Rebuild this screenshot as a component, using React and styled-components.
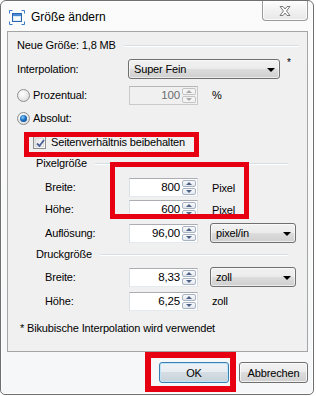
import React from "react";
import styled, { createGlobalStyle } from "styled-components";

const Global = createGlobalStyle`
  html, body { margin: 0; padding: 0; background: #ffffff; }
  body { font-family: "Liberation Sans", Arial, sans-serif; font-size: 11px; letter-spacing: -0.15px; color: #000; }
  * { box-sizing: border-box; }
`;

const Window = styled.div`
  position: relative;
  width: 314px;
  height: 395px;
  border: 1px solid #6f6f6f;
  border-radius: 6px 6px 5px 5px;
  background: linear-gradient(#fbfbfb, #f6f7f8);
  box-shadow: inset 0 0 0 1px #ffffff;
  display: flex;
  flex-direction: column;
  padding: 0 5px 0 6px;
`;

const TitleBar = styled.div`
  height: 30px;
  display: flex;
  align-items: flex-start;
  position: relative;
`;

const TitleIcon = styled.svg`
  margin: 9px 0 0 2px;
  flex: none;
`;

const TitleText = styled.div`
  margin: 9px 0 0 6px;
  font-size: 12px;
  letter-spacing: 0;
  line-height: 14px;
  color: #000;
`;

const CloseButton = styled.div`
  margin-left: auto;
  width: 46px;
  height: 20px;
  border: 1px solid #9a9a9a;
  border-top: none;
  border-radius: 0 0 4px 4px;
  background: linear-gradient(#fefefe, #f1f1f1 50%, #e8e8e8);
  box-shadow: inset 0 0 0 1px rgba(255,255,255,0.8);
  display: flex;
  align-items: center;
  justify-content: center;
`;

const Panel = styled.div`
  height: 321px;
  border: 1px solid #a5a5a5;
  background: #f0f0f0;
  padding: 3px 8px 0 9px;
  display: flex;
  flex-direction: column;
`;

const Row = styled.div`
  height: 20px;
  margin-top: ${(p) => p.$mt || 0}px;
  display: flex;
  align-items: center;
  white-space: nowrap;
`;

const Label = styled.div`
  width: ${(p) => p.$w || 112}px;
  padding-left: ${(p) => p.$indent || 0}px;
  flex: none;
  display: flex;
  align-items: center;
  gap: ${(p) => p.$gap || 0}px;
`;

const GroupTitle = styled.div`
  padding-left: ${(p) => p.$indent || 0}px;
  flex: none;
`;

const GroupLine = styled.div`
  flex: 1;
  height: 1px;
  margin: 1px ${(p) => p.$mr || 0}px 0 8px;
  background: #d5dfe5;
  box-shadow: 0 1px 0 #ffffff;
`;

const Combo = styled.div`
  width: ${(p) => p.$w}px;
  height: ${(p) => p.$h || 20}px;
  margin-left: ${(p) => p.$ml || 0}px;
  border: 1px solid #707070;
  border-radius: 3px;
  background: linear-gradient(#f2f2f2 0%, #ebebeb 50%, #dddddd 50%, #cfcfcf 100%);
  box-shadow: inset 0 0 0 1px rgba(255,255,255,0.6);
  display: flex;
  align-items: center;
  padding: 0 4px 0 5px;
  flex: none;
`;

const ComboText = styled.span`
  flex: 1;
`;

const Arrow = styled.span`
  width: 0;
  height: 0;
  border-left: 4px solid transparent;
  border-right: 4px solid transparent;
  border-top: 4px solid #000;
  margin-top: 1px;
`;

const Spin = styled.div`
  width: 69px;
  height: 19px;
  flex: none;
  border: 1px solid ${(p) => (p.$disabled ? "#b5b8bb" : "#abadb3")};
  border-left-color: ${(p) => (p.$disabled ? "#c8cacc" : "#dbdfe6")};
  border-right-color: ${(p) => (p.$disabled ? "#c8cacc" : "#dbdfe6")};
  border-bottom-color: ${(p) => (p.$disabled ? "#c8cacc" : "#e3e9ef")};
  background: ${(p) => (p.$disabled ? "#f0f0f0" : "#ffffff")};
  display: flex;
  align-items: stretch;
  padding: 1px;
`;

const SpinValue = styled.div`
  flex: 1;
  text-align: right;
  padding-right: 2px;
  line-height: 15px;
  font-size: 11.5px;
  color: ${(p) => (p.$disabled ? "#6d6d6d" : "#000")};
`;

const SpinButtons = styled.div`
  width: 14px;
  display: flex;
  flex-direction: column;
  gap: 1px;
`;

const SpinBtn = styled.div`
  flex: 1;
  border: 1px solid ${(p) => (p.$disabled ? "#c4c4c4" : "#a7b3c1")};
  border-radius: 2px;
  background: ${(p) =>
    p.$disabled ? "#f4f4f4" : "linear-gradient(#f8f9fb, #e3e8ef)"};
  display: flex;
  align-items: center;
  justify-content: center;
`;

const Tri = styled.span`
  width: 0;
  height: 0;
  border-left: 3px solid transparent;
  border-right: 3px solid transparent;
  ${(p) =>
    p.$up
      ? `border-bottom: 3px solid ${p.$disabled ? "#a8a8a8" : "#4d6185"};`
      : `border-top: 3px solid ${p.$disabled ? "#a8a8a8" : "#4d6185"};`}
`;

const Unit = styled.span`
  margin-left: ${(p) => p.$ml || 14}px;
  margin-top: ${(p) => p.$mt || 0}px;
`;

const Star = styled.span`
  margin-left: 7px;
  align-self: flex-start;
  font-size: 10px;
  line-height: 10px;
  margin-top: -1px;
`;

const RadioCircle = styled.span`
  width: 13px;
  height: 13px;
  border-radius: 50%;
  border: 1px solid #8e8f8f;
  background: radial-gradient(circle at 40% 35%, #ffffff 0%, #e6e6e6 60%, #cfcfcf 100%);
  display: flex;
  align-items: center;
  justify-content: center;
  flex: none;
  &::after {
    content: "";
    display: ${(p) => (p.$checked ? "block" : "none")};
    width: 7px;
    height: 7px;
    border-radius: 50%;
    background: radial-gradient(circle at 40% 35%, #8ad0fb 0%, #1b6fc0 45%, #0b3d82 100%);
  }
`;

const CheckBox = styled.span`
  width: 13px;
  height: 13px;
  border: 1px solid #8e8f8f;
  background: linear-gradient(135deg, #dcdcdc, #ffffff);
  padding: 1px;
  display: flex;
  flex: none;
`;

const CheckInner = styled.span`
  flex: 1;
  border: 1px solid #dadada;
  background: linear-gradient(135deg, #e6e6e6, #fdfdfd);
  position: relative;
  display: flex;
  align-items: center;
  justify-content: center;
`;

const Note = styled.div`
  margin-top: ${(p) => p.$mt || 0}px;
  padding-left: 3px;
  height: 20px;
  display: flex;
  align-items: center;
`;

const ButtonRow = styled.div`
  display: flex;
  justify-content: flex-end;
  gap: 10px;
  padding-top: 10px;
`;

const Button = styled.div`
  width: ${(p) => p.$w}px;
  height: 21px;
  border: 1px solid ${(p) => (p.$default ? "#3c7fb1" : "#707070")};
  border-radius: 3px;
  background: ${(p) =>
    p.$default
      ? "linear-gradient(#eef3f6 0%, #e6ecf0 50%, #d4dde3 50%, #c8d3da 100%)"
      : "linear-gradient(#f2f2f2 0%, #ebebeb 50%, #dddddd 50%, #cfcfcf 100%)"};
  box-shadow: inset 0 0 0 1px ${(p) => (p.$default ? "#bfe4f7" : "rgba(255,255,255,0.7)")};
  display: flex;
  align-items: center;
  justify-content: center;
`;

const RedBox = styled.div`
  position: absolute;
  left: ${(p) => p.$x}px;
  top: ${(p) => p.$y}px;
  width: ${(p) => p.$w}px;
  height: ${(p) => p.$h}px;
  border: ${(p) => p.$t || 5}px solid #e60012;
  pointer-events: none;
`;

function SpinBox({ value, disabled }) {
  return (
    <Spin $disabled={disabled}>
      <SpinValue $disabled={disabled}>{value}</SpinValue>
      <SpinButtons>
        <SpinBtn $disabled={disabled}>
          <Tri $up $disabled={disabled} />
        </SpinBtn>
        <SpinBtn $disabled={disabled}>
          <Tri $disabled={disabled} />
        </SpinBtn>
      </SpinButtons>
    </Spin>
  );
}

export default function App() {
  return (
    <>
      <Global />
      <Window>
        <TitleBar>
          <TitleIcon width="16" height="15" viewBox="0 0 16 15">
            <path d="M0.5 3.5V0.5H3.5M12.5 0.5H15.5V3.5M15.5 11.5V14.5H12.5M3.5 14.5H0.5V11.5" fill="none" stroke="#3a7bc8" strokeWidth="1" />
            <rect x="3.5" y="3.5" width="9" height="8" fill="#dbeaf8" stroke="#2c67b0" />
            <rect x="4" y="4" width="8" height="2" fill="#4c8ad4" />
            <rect x="5" y="7" width="6" height="3" fill="#ffffff" />
          </TitleIcon>
          <TitleText>Größe ändern</TitleText>
          <CloseButton>
            <svg width="14" height="12" viewBox="0 0 14 12">
              <path d="M2 1.5h3l2 2.5 2-2.5h3l-3.5 4.5 3.5 4.5h-3l-2-2.5-2 2.5h-3l3.5-4.5z" fill="#ffffff" stroke="#7a7a7a" strokeWidth="1" strokeLinejoin="round" />
            </svg>
          </CloseButton>
        </TitleBar>

        <Panel>
          <Row>
            <GroupTitle>Neue Größe: 1,8 MB</GroupTitle>
            <GroupLine $mr={0} />
          </Row>
          <Row $mt={4}>
            <Label $w={111}>Interpolation:</Label>
            <Combo $w={152}>
              <ComboText>Super Fein</ComboText>
              <Arrow />
            </Combo>
            <Star>*</Star>
          </Row>
          <Row $mt={6}>
            <Label $gap={3}>
              <RadioCircle />
              Prozentual:
            </Label>
            <SpinBox value="100" disabled />
            <Unit>%</Unit>
          </Row>
          <Row $mt={3}>
            <Label $gap={3}>
              <RadioCircle $checked />
              Absolut:
            </Label>
          </Row>
          <Row $mt={4}>
            <Label $indent={16} $gap={5} $w={250}>
              <CheckBox>
                <CheckInner>
                  <svg width="9" height="9" viewBox="0 0 9 9" style={{ position: "absolute", left: 0, top: 0 }}>
                    <path d="M1 4.5L3.5 7L8 1" fill="none" stroke="#4a5f97" strokeWidth="1.8" />
                  </svg>
                </CheckInner>
              </CheckBox>
              Seitenverhältnis beibehalten
            </Label>
          </Row>
          <Row $mt={1}>
            <GroupTitle $indent={19}>Pixelgröße</GroupTitle>
            <GroupLine $mr={11} />
          </Row>
          <Row $mt={4}>
            <Label $indent={28}>Breite:</Label>
            <SpinBox value="800" />
            <Unit $mt={1}>Pixel</Unit>
          </Row>
          <Row $mt={2}>
            <Label $indent={28}>Höhe:</Label>
            <SpinBox value="600" />
            <Unit $mt={1}>Pixel</Unit>
          </Row>
          <Row $mt={4}>
            <Label $indent={28}>Auflösung:</Label>
            <SpinBox value="96,00" />
            <Combo $w={86} $ml={12}>
              <ComboText>pixel/in</ComboText>
              <Arrow />
            </Combo>
          </Row>
          <Row $mt={1}>
            <GroupTitle $indent={19}>Druckgröße</GroupTitle>
            <GroupLine $mr={11} />
          </Row>
          <Row $mt={3}>
            <Label $indent={28}>Breite:</Label>
            <SpinBox value="8,33" />
            <Combo $w={86} $ml={12}>
              <ComboText>zoll</ComboText>
              <Arrow />
            </Combo>
          </Row>
          <Row $mt={4}>
            <Label $indent={28}>Höhe:</Label>
            <SpinBox value="6,25" />
            <Unit>zoll</Unit>
          </Row>
          <Note $mt={7}>* Bikubische Interpolation wird verwendet</Note>
        </Panel>

        <ButtonRow>
          <Button $w={70} $default>OK</Button>
          <Button $w={69}>Abbrechen</Button>
        </ButtonRow>

        <RedBox $x={23} $y={131} $w={175} $h={25} />
        <RedBox $x={109} $y={161} $w={139} $h={57} />
        <RedBox $x={144} $y={351} $w={91} $h={40} $t={6} />
      </Window>
    </>
  );
}
